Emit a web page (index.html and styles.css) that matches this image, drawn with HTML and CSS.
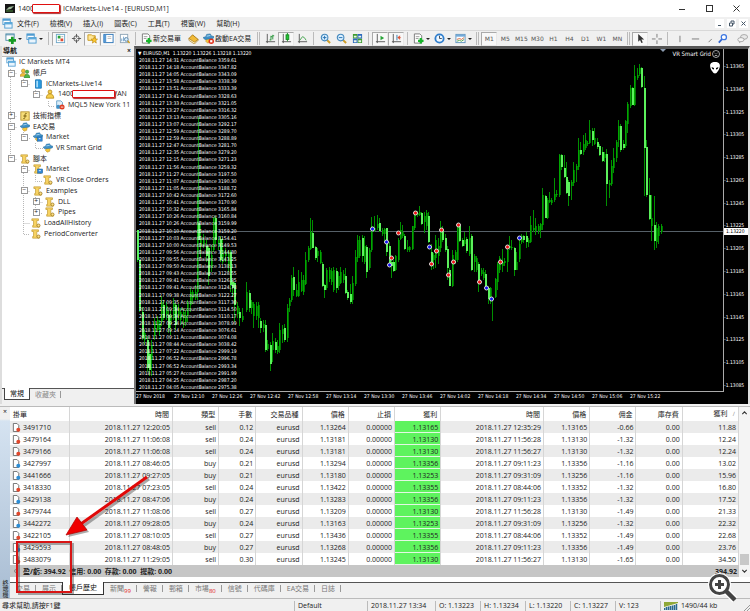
FILE: index.html
```
<!DOCTYPE html>
<html lang="zh-Hant">
<head>
<meta charset="UTF-8">
<title>ICMarkets-Live14 - [EURUSD,M1]</title>
<link rel="stylesheet" href="styles.css">
</head>
<body>
<svg class="sprite" aria-hidden="true">
	<symbol id="i-windows" viewBox="0 0 12 12"><rect x="1" y="1" width="8" height="6" fill="#fff" stroke="#4f9bd0"/><path d="M1 2h8" stroke="#4f9bd0" stroke-width="2"/><rect x="3" y="5" width="8" height="6" fill="#eaf5fd" stroke="#4f9bd0"/><path d="M3 6h8" stroke="#5aa9dc" stroke-width="2"/></symbol>
	<symbol id="i-newchart" viewBox="0 0 12 12"><rect x="1" y="1" width="9" height="7" fill="#fff" stroke="#4c8aa8"/><path d="M1 2h9" stroke="#4c8aa8"/><path d="M8 4v8M4 8h8" stroke="#179b22" stroke-width="3"/></symbol>
	<symbol id="i-watch" viewBox="0 0 12 12"><rect x="1.5" y="1.5" width="9" height="9" fill="#fff" stroke="#70a8c8"/><rect x="3" y="3" width="3" height="3" fill="#27a338"/><rect x="6" y="6" width="3" height="3" fill="#df4c32"/><path d="M3 8h2M7 4h2" stroke="#aaa"/></symbol>
	<symbol id="i-target" viewBox="0 0 12 12"><circle cx="6" cy="6" r="3" fill="none" stroke="#555"/><path d="M6 1v4M6 7v4M1 6h4M7 6h4" stroke="#555"/></symbol>
	<symbol id="i-nav" viewBox="0 0 12 12"><path d="M1 2h4l1 1h3v5H1z" fill="#ffe696" stroke="#c99a1e"/><path d="M8 4l1 2.500 2.500.2-2 1.700.7 2.600L8 9.600 5.800 11l.7-2.600-2-1.700L7 6.500z" fill="#ffcb2e" stroke="#b98512" stroke-width=".7"/></symbol>
	<symbol id="i-terminal" viewBox="0 0 12 12"><rect x="1" y="1.500" width="10" height="9" fill="#fff" stroke="#2b74b7"/><path d="M2 2v8" stroke="#5798d3" stroke-width="3"/><path d="M5 4h4M5 6h4" stroke="#bbb"/></symbol>
	<symbol id="i-tester" viewBox="0 0 12 12"><rect x="1.500" y="1.500" width="8" height="9" fill="#fff" stroke="#8fa6b8"/><path d="M3 9V6M5 9V4M7 9V5" stroke="#6ca0ca"/><circle cx="8" cy="7" r="2" fill="#d9f0ff" stroke="#5b83a5"/><path d="M9.500 8.500l2 2.500" stroke="#c99a1e" stroke-width="1.500"/></symbol>
	<symbol id="i-order" viewBox="0 0 12 12"><path d="M1.500 1h6l2 2v8h-8z" fill="#fff" stroke="#777"/><path d="M3 4h4M3 6h3" stroke="#999"/><path d="M8.500 5.500v6M5.500 8.500h6" stroke="#17b52b" stroke-width="2.500"/></symbol>
	<symbol id="i-book" viewBox="0 0 12 12"><path d="M1 6l4-4 6 5-4 4z" fill="#f1bb38" stroke="#a97814"/><path d="M1 6v2l6 4 4-4V7L7 10z" fill="#fff3c8" stroke="#a97814" stroke-width=".7"/></symbol>
	<symbol id="i-ea" viewBox="0 0 12 12"><path d="M4 5h5l-1 5-3 1-2-2z" fill="#f5c63c" stroke="#b88a1b" stroke-width=".6"/><path d="M0 5l3-1 1-2.500 4-.5 1 2 3 1-1 2-4 .5L2 7z" fill="#3f91c8" stroke="#1f6798" stroke-width=".6"/><path d="M4 3.500l4-.8" stroke="#b5dcf3"/></symbol>
	<symbol id="i-stop" viewBox="0 0 12 12"><use href="#i-ea"/><circle cx="9" cy="9" r="3" fill="#e0301c"/><rect x="7.800" y="7.800" width="2.400" height="2.400" fill="#fff"/></symbol>
	<symbol id="i-bar" viewBox="0 0 12 12"><path d="M2.500 1v10M1 9.500h10" stroke="#555" fill="none"/><path d="M5 7.500h1.500M6.500 3v5M6.500 4H8M8.500 2v5M8.500 3H10" stroke="#239336"/></symbol>
	<symbol id="i-candle" viewBox="0 0 12 12"><path d="M2.500 1v10M1 9.500h10" stroke="#555"/><path d="M7 0v9" stroke="#138c20"/><rect x="5.500" y="2" width="3" height="5" fill="#24c535" stroke="#138c20"/></symbol>
	<symbol id="i-line" viewBox="0 0 12 12"><path d="M2.500 1v10M1 9.500h10" stroke="#555"/><path d="M3 8l3-4 2 1 2 3" fill="none" stroke="#42a34b"/></symbol>
	<symbol id="i-zoomin" viewBox="0 0 12 12"><path d="M7.500 7.500l3.500 3.500" stroke="#cf9e29" stroke-width="2.200"/><circle cx="5" cy="5" r="3.600" fill="#d9efff" stroke="#4588bd" stroke-width="1.200"/><path d="M3 5h4M5 3v4" stroke="#236fb0"/></symbol>
	<symbol id="i-zoomout" viewBox="0 0 12 12"><path d="M7.500 7.500l3.500 3.500" stroke="#cf9e29" stroke-width="2.200"/><circle cx="5" cy="5" r="3.600" fill="#d9efff" stroke="#4588bd" stroke-width="1.200"/><path d="M3 5h4" stroke="#236fb0"/></symbol>
	<symbol id="i-tile" viewBox="0 0 12 12"><path d="M1 1h5v5H1zM6 6h5v5H6z" fill="#3f9c30"/><path d="M6 1h5v5H6zM1 6h5v5H1z" fill="#2d69bd"/><path d="M2 3h3v2H2zM7 3h3v2H7zM2 8h3v2H2zM7 8h3v2H7z" fill="#e8f5e8"/></symbol>
	<symbol id="i-scroll" viewBox="0 0 12 12"><path d="M2.500 1v10M1 9.500h10" stroke="#555"/><path d="M6 3l4 2.500L6 8z" fill="#27a338"/></symbol>
	<symbol id="i-shift" viewBox="0 0 12 12"><path d="M2.500 1v10M1 9.500h10" stroke="#555"/><path d="M6.500 2v6" stroke="#2c79ae"/><path d="M11 5H8M9.500 3L7.500 5l2 2z" fill="#d8492a" stroke="#d8492a" stroke-width=".6"/></symbol>
	<symbol id="i-clock" viewBox="0 0 12 12"><circle cx="6" cy="6" r="4.500" fill="#eef7ff" stroke="#2e7dcc" stroke-width="2"/><path d="M6 3v3h2.500" fill="none" stroke="#345"/></symbol>
	<symbol id="i-template" viewBox="0 0 12 12"><rect x="1" y="1.500" width="10" height="9" fill="#fff" stroke="#5e94bf"/><path d="M1 3h10" stroke="#73aada" stroke-width="2"/><path d="M2 7l3-1 2 1 3-2" fill="none" stroke="#d3653b"/><path d="M2 9l3-1 2 1 3-2" fill="none" stroke="#4aa04a"/></symbol>
	<symbol id="i-cursor" viewBox="0 0 12 12"><path d="M3.500 1v8.500l2-2 1.500 3.500 1.500-.7L7 7h3z" fill="#333"/></symbol>
	<symbol id="i-cross" viewBox="0 0 12 12"><path d="M6.500 1v4M6.500 8v4M1 6.500h4M8 6.500h4" stroke="#777"/></symbol>
	<symbol id="i-vline" viewBox="0 0 12 12"><path d="M6.500 3v7" stroke="#777"/></symbol>
	<symbol id="i-hline" viewBox="0 0 12 12"><path d="M2 6.500h8" stroke="#777"/></symbol>
	<symbol id="i-trend" viewBox="0 0 12 12"><path d="M5 10l3.500-3.500" stroke="#777"/></symbol>
	<symbol id="i-search" viewBox="0 0 12 12"><path d="M6 6L2 10.500" stroke="#2e63d0" stroke-width="2"/><circle cx="7.500" cy="4.500" r="2.800" fill="#fff" stroke="#3c76e0" stroke-width="1.400"/></symbol>
	<symbol id="i-chat" viewBox="0 0 14 12"><ellipse cx="9" cy="4" rx="4.500" ry="3" fill="#e8e8e8" stroke="#999"/><path d="M3 10l-.5 2L6 9.500z" fill="#999"/><ellipse cx="5" cy="7.500" rx="4" ry="2.600" fill="#f5f5f5" stroke="#999"/></symbol>
	<symbol id="i-accounts" viewBox="0 0 12 12"><circle cx="4" cy="3.500" r="2.300" fill="#f0be3c" stroke="#a77b16" stroke-width=".6"/><path d="M0 10c0-5 8-5 8 0z" fill="#f0be3c" stroke="#a77b16" stroke-width=".6"/><circle cx="8.500" cy="4.500" r="2" fill="#4fb54a" stroke="#2d7b2b" stroke-width=".6"/><path d="M5 12c0-6 7-6 7 0z" fill="#4fb54a" stroke="#2d7b2b" stroke-width=".6"/></symbol>
	<symbol id="i-server" viewBox="0 0 12 12"><path d="M3 1h6l1 1v9H3z" fill="#2b9be0" stroke="#1773b4"/><path d="M4 2h2v8H4z" fill="#a8dcfa"/></symbol>
	<symbol id="i-user" viewBox="0 0 12 12"><circle cx="6" cy="3.500" r="2.300" fill="#f6cf4b" stroke="#b88a1b"/><path d="M1.500 11c0-7 9-7 9 0z" fill="#f6cf4b" stroke="#b88a1b"/></symbol>
	<symbol id="i-signal" viewBox="0 0 12 12"><path d="M2 1h5l2 2v7H2z" fill="#ddeef8" stroke="#5c9bc4"/><circle cx="4" cy="8" r="2.300" fill="#3f91c8"/><circle cx="8.500" cy="8.500" r="3" fill="#df3c22"/><path d="M7 8.500h3" stroke="#fff"/></symbol>
	<symbol id="i-func" viewBox="0 0 12 12"><rect x="1" y="1" width="10" height="10" fill="#f6dc78" stroke="#b48e26"/><path d="M8 3c-2-1-2 1-2 3s0 4-2 3M4 6h4" fill="none" stroke="#6b4f00"/></symbol>
	<symbol id="i-market" viewBox="0 0 12 12"><use href="#i-ea"/><rect x="5" y="6" width="6" height="5" fill="#2f86d6" stroke="#1a5f9e" stroke-width=".6"/><path d="M7 8h2" stroke="#fff"/></symbol>
	<symbol id="i-script" viewBox="0 0 12 12"><path d="M1 1h8v2H7v6h3v2H2V9h1V3H1z" fill="#f7d261" stroke="#b68d22" stroke-width=".7"/><circle cx="9" cy="9" r="1.800" fill="#ffe184" stroke="#9d7a20"/></symbol>
	<symbol id="i-smarket" viewBox="0 0 12 12"><use href="#i-script"/><rect x="5.500" y="6" width="6" height="5" fill="#2f86d6" stroke="#1a5f9e" stroke-width=".6"/><path d="M7 8h2.500" stroke="#fff"/></symbol>
	<symbol id="i-sell" viewBox="0 0 10 10"><path d="M1.500.5h4l2 2v7h-6z" fill="#fff" stroke="#666"/><circle cx="7" cy="7.500" r="2.200" fill="#e2472a"/></symbol>
	<symbol id="i-buy" viewBox="0 0 10 10"><path d="M1.500.5h4l2 2v7h-6z" fill="#fff" stroke="#666"/><circle cx="7" cy="7.500" r="2.200" fill="#2d8ed6"/></symbol>
</svg>

<header class="titlebar">
	<svg class="app-icon" viewBox="0 0 10 9"><rect width="10" height="9" fill="#161616"/><path d="M1 6l3-3 5-1-3 3z" fill="#9fba9a"/><path d="M1 7h7" stroke="#4f8b3d"/></svg>
	<span>1400</span><i class="redact"></i><span>ICMarkets-Live14 - [EURUSD,M1]</span>
	<div class="win-btns">
		<button aria-label="最小化"><svg viewBox="0 0 9 9"><path d="M1 5.500h6" stroke="#333"/></svg></button>
		<button aria-label="最大化"><svg viewBox="0 0 9 9"><rect x="1.500" y="1.500" width="6" height="6" fill="none" stroke="#333"/></svg></button>
		<button aria-label="關閉"><svg viewBox="0 0 9 9"><path d="M1.500 1.500l6 6M7.500 1.500l-6 6" stroke="#333"/></svg></button>
	</div>
</header>

<nav class="menubar">
	<svg class="icon"><use href="#i-windows"/></svg>
	<button>文件(F)</button><button>檢視(V)</button><button>插入(I)</button><button>圖表(C)</button><button>工具(T)</button><button>視窗(W)</button><button>幫助(H)</button>
	<div class="mdi-btns">
		<button aria-label="最小化圖表"><svg viewBox="0 0 9 9"><path d="M3 6.500h3" stroke="#456"/></svg></button>
		<button aria-label="還原圖表"><svg viewBox="0 0 9 9"><path d="M4 3.500V2h3v3H6M2.500 4h3v3h-3z" fill="none" stroke="#456"/></svg></button>
		<button aria-label="關閉圖表"><svg viewBox="0 0 9 9"><path d="M2.500 2.500l4 4M6.500 2.500l-4 4" stroke="#456"/></svg></button>
	</div>
</nav>

<div class="toolbar">
	<button class="drop" aria-label="新圖表"><svg class="icon"><use href="#i-newchart"/></svg></button>
	<button class="drop" aria-label="設定檔"><svg class="icon"><use href="#i-windows"/></svg></button>
	<i class="sep"></i>
	<button class="on" aria-label="市場報價"><svg class="icon"><use href="#i-watch"/></svg></button>
	<button aria-label="數據視窗"><svg class="icon"><use href="#i-target"/></svg></button>
	<button class="on" aria-label="導航"><svg class="icon"><use href="#i-nav"/></svg></button>
	<button class="on" aria-label="終端"><svg class="icon"><use href="#i-terminal"/></svg></button>
	<button aria-label="策略測試"><svg class="icon"><use href="#i-tester"/></svg></button>
	<i class="sep"></i>
	<button class="text"><svg class="icon"><use href="#i-order"/></svg>新交易單</button>
	<button aria-label="編輯器"><svg class="icon"><use href="#i-book"/></svg></button>
	<button class="text"><svg class="icon"><use href="#i-stop"/></svg>啟動EA交易</button>
	<i class="grip"></i>
	<button aria-label="柱狀圖"><svg class="icon"><use href="#i-bar"/></svg></button>
	<button class="on" aria-label="陰陽燭"><svg class="icon"><use href="#i-candle"/></svg></button>
	<button aria-label="折線圖"><svg class="icon"><use href="#i-line"/></svg></button>
	<i class="sep"></i>
	<button aria-label="放大"><svg class="icon"><use href="#i-zoomin"/></svg></button>
	<button aria-label="縮小"><svg class="icon"><use href="#i-zoomout"/></svg></button>
	<button aria-label="平鋪"><svg class="icon"><use href="#i-tile"/></svg></button>
	<i class="sep"></i>
	<button class="on" aria-label="自動捲動"><svg class="icon"><use href="#i-scroll"/></svg></button>
	<button class="on" aria-label="圖表平移"><svg class="icon"><use href="#i-shift"/></svg></button>
	<i class="sep"></i>
	<button class="drop" aria-label="指標"><svg class="icon"><use href="#i-order"/></svg></button>
	<button class="drop" aria-label="週期"><svg class="icon"><use href="#i-clock"/></svg></button>
	<button class="drop" aria-label="模板"><svg class="icon"><use href="#i-template"/></svg></button>
	<i class="grip"></i>
	<button class="tf on">M1</button><button class="tf">M5</button><button class="tf">M15</button><button class="tf">M30</button><button class="tf">H1</button><button class="tf">H4</button><button class="tf">D1</button><button class="tf">W1</button><button class="tf">MN</button>
	<i class="grip"></i>
	<button class="on" aria-label="游標"><svg class="icon"><use href="#i-cursor"/></svg></button>
	<button aria-label="十字線"><svg class="icon"><use href="#i-cross"/></svg></button>
	<i class="sep"></i>
	<button aria-label="垂直線"><svg class="icon"><use href="#i-vline"/></svg></button>
	<button aria-label="水平線"><svg class="icon"><use href="#i-hline"/></svg></button>
	<button class="slim" aria-label="趨勢線"><svg class="icon"><use href="#i-trend"/></svg></button>
	<button class="slim" aria-label="搜尋"><svg class="icon"><use href="#i-search"/></svg></button>
	<button class="chat" aria-label="聊天"><svg class="icon"><use href="#i-chat"/></svg></button>
</div>

<main class="work">
	<aside class="navigator">
		<h2>導航<button aria-label="關閉導航">×</button></h2>
		<div class="tree-box">
			<svg class="tree-lines"><path d="M10.500 12V105M10.500 16.500H17M23.500 22V28M23.500 27.500H30M35.500 33V39M35.500 38.500H43M48.500 44V49.500H55M10.500 59.500H17M10.500 70.500H17M23.500 75V81.500H30M35.500 86V91.500H43M10.500 102.500H17M23.500 108V177.500H30M23.500 113.500H30M35.500 118V124.500H43M23.500 134.500H30M35.500 140V156.500H43M35.500 145.500H43M23.500 166.500H30"/></svg>
			<ul class="tree">
				<li class="l0"><svg class="icon"><use href="#i-windows"/></svg>IC Markets MT4</li>
				<li class="l1 open"><svg class="icon"><use href="#i-accounts"/></svg>帳戶</li>
				<li class="l2 open"><svg class="icon"><use href="#i-server"/></svg>ICMarkets-Live14</li>
				<li class="l3 open"><svg class="icon"><use href="#i-user"/></svg>1400<i class="redact wide"></i>VAN</li>
				<li class="l4"><svg class="icon"><use href="#i-signal"/></svg>MQL5 New York 11</li>
				<li class="l1 shut"><svg class="icon"><use href="#i-func"/></svg>技術指標</li>
				<li class="l1 open"><svg class="icon"><use href="#i-ea"/></svg>EA交易</li>
				<li class="l2 open"><svg class="icon"><use href="#i-market"/></svg>Market</li>
				<li class="l3"><svg class="icon"><use href="#i-ea"/></svg>VR Smart Grid</li>
				<li class="l1 open"><svg class="icon"><use href="#i-script"/></svg>腳本</li>
				<li class="l2 open"><svg class="icon"><use href="#i-smarket"/></svg>Market</li>
				<li class="l3"><svg class="icon"><use href="#i-script"/></svg>VR Close Orders</li>
				<li class="l2 open"><svg class="icon"><use href="#i-script"/></svg>Examples</li>
				<li class="l3 shut"><svg class="icon"><use href="#i-script"/></svg>DLL</li>
				<li class="l3 shut"><svg class="icon"><use href="#i-script"/></svg>Pipes</li>
				<li class="l2"><svg class="icon"><use href="#i-script"/></svg>LoadAllHistory</li>
				<li class="l2"><svg class="icon"><use href="#i-script"/></svg>PeriodConverter</li>
			</ul>
		</div>
		<div class="nav-tabs"><button class="active">常規</button><button>收藏夾</button></div>
	</aside>

	<section class="chart">
		<div class="plot">
			<svg class="candles" id="candles"></svg>
			<div class="quote"><b>▼</b> EURUSD,M1 &nbsp;1.13220 1.13226 1.13218 1.13220</div>
			<ol class="log" id="log"></ol>
			<div class="expert">VR Smart Grid<svg viewBox="0 0 8 8"><circle cx="4" cy="4" r="3.500" fill="none" stroke="#ccc" stroke-width=".8"/><path d="M2.500 3l1 .7M5.500 3l-1 .7M2.500 6q1.500-1.500 3 0" stroke="#ccc" fill="none" stroke-width=".8"/></svg></div>
			<svg class="alien" viewBox="0 0 10 12"><path d="M5 0c7 0 5 6 3 9q-3 5-6 0C0 6-2 0 5 0z" fill="#fff"/><path d="M1.500 5l2.500 1v1.500q-2 0-2.500-2.500zM8.500 5L6 6v1.500q2 0 2.500-2.500z" fill="#000"/></svg>
			<svg class="shift" viewBox="0 0 6 3"><path d="M0 0h6L3 3z" fill="#8c9bb0"/></svg>
		</div>
		<div class="prices" id="prices"></div>
		<div class="times" id="times"></div>
	</section>
</main>

<section class="terminal">
	<div class="side"><button aria-label="關閉終端">×</button><span>終端機</span></div>
	<div class="history">
		<div class="grid">
			<table>
				<colgroup><col class="c-id"><col class="c-time"><col><col class="c-lots"><col><col><col><col><col class="c-time"><col><col><col><col class="c-profit"></colgroup>
				<thead><tr><th>掛單</th><th>時間</th><th>類型</th><th>手數</th><th>交易品種</th><th>價格</th><th>止損</th><th>獲利</th><th>時間</th><th>價格</th><th>佣金</th><th>庫存費</th><th>獲利 &nbsp; <small>∕</small></th></tr></thead>
				<tbody id="orders"></tbody>
				<tfoot><tr><td colspan="12"><i class="dot"></i>盈/虧: 394.92 &nbsp;信用: 0.00 &nbsp;存款: 0.00 &nbsp;提款: 0.00</td><td>394.92</td></tr></tfoot>
			</table>
			<div class="scroll"><svg viewBox="0 0 10 8"><path d="M3 5l2-2 2 2" fill="none" stroke="#333"/></svg><i></i><svg viewBox="0 0 10 8"><path d="M3 3l2 2 2-2" fill="none" stroke="#333"/></svg></div>
		</div>
		<div class="tabs">
			<button>交易</button><button>展示</button><button class="active">帳戶歷史</button><button>新聞<sub>99</sub></button><button>警報</button><button>郵箱</button><button>市場<sub>80</sub></button><button>信號</button><button>代碼庫</button><button>EA交易</button><button>日誌</button>
		</div>
	</div>
	<svg class="notes" viewBox="0 0 160 130"><g transform="translate(2 2)" opacity=".4"><path d="M147 10L80 58" stroke="#333" stroke-width="3"/><path d="M66 68l11-18 10 13z" fill="#333"/><rect x="17" y="75" width="54" height="50" fill="none" stroke="#333" stroke-width="2"/></g><path d="M147 10L78 59" stroke="#e00808" stroke-width="3"/><path d="M66 68l11-18 10 13z" fill="#f00000" stroke="#b00000" stroke-width=".7"/><rect x="17" y="75" width="54" height="50" fill="none" stroke="#d81414" stroke-width="2"/></svg>
</section>

<footer class="status">
	<span class="hint">尋求幫助,請按F1鍵</span>
	<span class="profile">Default</span>
	<span class="clock">2018.11.27 13:34</span>
	<span>O: 1.13223</span>
	<span>H: 1.13234</span>
	<span>L: 1.13220</span>
	<span>C: 1.13227</span>
	<span>V: 123</span>
	<span class="net"><svg viewBox="0 0 14 8"><path d="M0 0h14v1L0 5z" fill="#8fa838"/><path d="M.5 8V6M2.500 8V5M4.500 8V4.500M6.500 8V4M8.500 8V3.500M10.500 8V3M12.500 8V2" stroke="#28688f" stroke-width="1.500"/></svg>1490/44 kb</span>
	<svg class="resize" viewBox="0 0 9 9"><path d="M1 9l8-8M4 9l5-5M7 9l2-2" stroke="#999"/></svg>
</footer>

<button class="magnify" aria-label="放大圖片"><svg viewBox="0 0 30 30"><path d="M18 18l9 9" stroke="#fff" stroke-width="7"/><circle cx="11.500" cy="11.500" r="9.500" fill="#fff" stroke="#fff" stroke-width="4"/><path d="M18 18l9 9" stroke="#444" stroke-width="4.500"/><circle cx="11.500" cy="11.500" r="9" fill="#fff" stroke="#444" stroke-width="3"/><path d="M7 11.500h9M11.500 7v9" stroke="#444" stroke-width="3"/></svg></button>
<script src="chart.js"></script>
</body>
</html>
```
FILE: styles.css
```
* {
	box-sizing: border-box;
}

body {
	margin: 0;
	min-height: 100vh;
	display: flex;
	flex-direction: column;
	position: relative;
	background: #f0f0f0;
	color: #222;
	font: 7px/10px "Open Sans", "Noto Sans CJK TC", sans-serif;
}

button {
	margin: 0;
	padding: 0;
	border: 0;
	background: none;
	color: inherit;
	font: inherit;
	white-space: nowrap;
}

svg {
	display: block;
	flex: none;
}

.sprite {
	position: absolute;
	width: 0;
	height: 0;
}

.icon {
	width: 11px;
	height: 11px;
}

/* title */
.titlebar {
	display: flex;
	align-items: center;
	height: 17px;
	padding-left: 5px;
	background: #fff;
}

.app-icon {
	width: 10px;
	height: 9px;
	margin-right: 3px;
}

.redact {
	width: 28px;
	height: 9px;
	margin: 0 3px 0 -2px;
	border: 1px solid #e01010;
	border-radius: 1px;
	background: #fff;
	box-shadow: 1px 1px 1px #a33;
}

.redact.wide {
	width: 43px;
	height: 8px;
	margin-right: -2px;
	z-index: 1;
}

.win-btns,
.mdi-btns {
	display: flex;
	margin-left: auto;
}

.win-btns button {
	width: 27px;
	display: flex;
	justify-content: center;
}

.win-btns svg {
	width: 9px;
	height: 9px;
}

/* menu */
.menubar {
	display: flex;
	align-items: center;
	gap: 11px;
	height: 13px;
	padding-left: 2px;
}

.menubar .icon {
	margin-right: -7px;
}

.mdi-btns {
	gap: 3px;
	padding-right: 2px;
}

.mdi-btns button {
	background: #fff;
}

.mdi-btns svg {
	width: 9px;
	height: 9px;
}

/* toolbar */
.toolbar {
	display: flex;
	align-items: center;
	height: 16px;
	padding-left: 3px;
	border-top: 1px solid #d8d8d8;
}

.toolbar button {
	flex: none;
	width: 16px;
	height: 14px;
	display: flex;
	align-items: center;
	justify-content: center;
	border: 1px solid transparent;
}

.toolbar .on {
	border-color: #aaa #e8e8e8 #e8e8e8 #aaa;
	background: #f8f8f8;
}

.toolbar .drop {
	width: 21px;
	gap: 2px;
}

.toolbar .drop::after {
	content: "";
	border: 2px solid transparent;
	border-top-color: #222;
	border-bottom: 0;
}

.toolbar .text {
	width: auto;
	padding: 0 3px 0 1px;
	gap: 1px;
}

.toolbar .tf {
	color: #555;
	font: 6px/10px "DejaVu Sans", sans-serif;
}

.toolbar .slim {
	width: 13px;
}

.toolbar .chat {
	margin-left: auto;
}

.sep {
	width: 1px;
	height: 13px;
	margin: 0 3px;
	background: #bbb;
}

.grip {
	width: 3px;
	height: 13px;
	margin: 0 2px;
	border: solid #bbb;
	border-width: 0 1px;
}

/* navigator */
.work {
	display: flex;
	height: 358px;
}

.navigator {
	display: flex;
	flex-direction: column;
	flex: none;
	width: 134px;
	border-left: 2px solid #ddd;
	background: #fff;
}

.navigator h2 {
	display: flex;
	justify-content: space-between;
	margin: 0;
	padding: 0 3px 0 1px;
	background: #f0f0f0;
	font-size: 7px;
	line-height: 10px;
}

.tree-box {
	flex: 1;
	position: relative;
	border-top: 1px solid #bbb;
	overflow: hidden;
}

.tree-lines {
	position: absolute;
	left: -2px;
	top: 0;
	width: 60px;
	height: 182px;
	fill: none;
	stroke: #b8b8b8;
	stroke-dasharray: 1 1;
}

.tree {
	position: relative;
	display: grid;
	grid-template-rows: repeat(17, 1fr);
	height: 182px;
	margin: 0;
	padding: 0;
	list-style: none;
}

.tree li {
	display: flex;
	align-items: center;
	min-height: 0;
	white-space: nowrap;
}

.tree .icon {
	width: 10px;
	height: 10px;
	margin-right: 3px;
}

.l0 { padding-left: 4px; }
.l1 { padding-left: 16px; }
.l2 { padding-left: 29px; }
.l3 { padding-left: 41px; }
.l4 { padding-left: 53px; }

.open::before,
.shut::before {
	content: "−";
	width: 5px;
	height: 5px;
	margin: 0 5px 0 -10px;
	border: 1px solid #999;
	background: #fff;
	font: 5px/3px "DejaVu Sans", sans-serif;
	text-align: center;
	text-indent: -1px;
}

.shut::before {
	content: "+";
}

.nav-tabs {
	display: flex;
	height: 16px;
	padding: 0 0 4px 2px;
	border-top: 1px solid #555;
	background: #f0f0f0;
	color: #888;
}

.nav-tabs button {
	padding: 0 5px;
	background: linear-gradient(#999, #999) right center / 1px 7px no-repeat;
}

.nav-tabs .active {
	margin-top: -1px;
	border: solid #444;
	border-width: 0 1px 1px;
	background: #fff;
	color: #111;
}

/* chart */
.chart {
	flex: 1;
	display: grid;
	grid-template: 1fr 12px / 1fr 24px;
	min-width: 0;
	border-top: 3px solid #555;
	border-left: 2px solid #777;
	border-right: 2px solid #ddd;
	background: #000;
	color: #fff;
	font: 5px/7px "DejaVu Sans Condensed", "DejaVu Sans", sans-serif;
}

.plot {
	position: relative;
	overflow: hidden;
	border: solid #aaa;
	border-width: 0 1px 1px 0;
}

.candles {
	position: absolute;
	left: 0;
	top: 0;
	width: 100%;
	height: 100%;
}

.quote {
	position: relative;
	padding-left: 2px;
	line-height: 8px;
}

.quote b {
	font-weight: normal;
}

.log {
	position: relative;
	display: grid;
	grid-auto-rows: 1fr;
	height: 334px;
	margin: 0;
	padding: 0 0 0 3px;
	list-style: none;
}

.log li {
	min-height: 0;
	white-space: pre;
}

.expert {
	position: absolute;
	right: 3px;
	top: 0;
	display: flex;
	align-items: center;
	gap: 1px;
	font-size: 6px;
	line-height: 9px;
}

.expert svg {
	width: 8px;
	height: 8px;
}

.alien {
	position: absolute;
	right: 3px;
	top: 13px;
	width: 10px;
	height: 12px;
}

.shift {
	position: absolute;
	right: 57px;
	top: 0;
	width: 6px;
	height: 3px;
}

.prices {
	position: relative;
	display: flex;
	flex-direction: column;
	justify-content: space-between;
	padding: 14px 0 3px;
}

.prices span::before {
	content: "-";
}

.prices .now {
	position: absolute;
	left: 0;
	right: 0;
	top: 179px;
	padding-left: 2px;
	background: #fff;
	color: #000;
}

.prices .now::before {
	content: none;
}

.times {
	grid-column: 1 / 3;
	display: flex;
	overflow: hidden;
	line-height: 9px;
}

.times span {
	flex: none;
	width: 38px;
	white-space: nowrap;
}

/* terminal */
.terminal {
	position: relative;
	display: flex;
	margin-top: 2px;
	border-top: 1px solid #bbb;
	border-bottom: 1px solid #bbb;
}

.side {
	display: flex;
	flex-direction: column;
	justify-content: space-between;
	align-items: center;
	width: 10px;
	background: linear-gradient(#f0f0f0 12px, #d5e3f1 14px, #a9bdd3);
}

.side span {
	writing-mode: vertical-rl;
	line-height: 8px;
	font-size: 6px;
}

.history {
	flex: 1;
	min-width: 0;
}

.grid {
	display: flex;
	padding-bottom: 5px;
	background: #fff;
	border-bottom: 1px solid #555;
}

table {
	flex: 1;
	width: 100%;
	table-layout: fixed;
	border-collapse: separate;
	border-spacing: 0;
}

col { width: 46px; }
.c-id { width: 60px; }
.c-time { width: 102px; }
.c-lots { width: 37px; }
.c-profit { width: 56px; }

th,
td {
	height: 12px;
	padding: 0 2px;
	border-right: 1px solid #d6d6d6;
	font-weight: normal;
	text-align: right;
	line-height: 11px;
	white-space: nowrap;
}

th {
	height: 14px;
	padding-right: 3px;
}

th:first-child,
td:first-child {
	text-align: left;
}

th:first-child {
	padding-left: 3px;
}

th small {
	color: #888;
}

tbody tr:nth-child(odd) {
	background: #ebebeb;
}

tbody td:first-child svg {
	display: inline-block;
	width: 9px;
	height: 9px;
	margin-right: 2px;
	vertical-align: middle;
}

.hit {
	background: #5ef35e;
	box-shadow: inset 0 -1px #e4f8e4;
}

tfoot td {
	border: 0;
	background: #c6c6c6;
	font-weight: bold;
}

.dot {
	display: inline-block;
	width: 4px;
	height: 4px;
	margin: 0 5px 1px 2px;
	border: 1px solid #888;
	border-radius: 50%;
	vertical-align: middle;
}

.scroll {
	display: flex;
	flex-direction: column;
	width: 11px;
	background: #f4f4f4;
}

.scroll svg {
	width: 11px;
	height: 12px;
}

.scroll i {
	width: 9px;
	height: 11px;
	margin: auto 1px 0;
	background: #c8c8c8;
}

.tabs {
	display: flex;
	height: 15px;
	padding-bottom: 4px;
	color: #777;
}

.tabs button {
	height: 11px;
	padding: 0 6px;
	background: linear-gradient(#999, #999) right center / 1px 7px no-repeat;
}

.tabs .active {
	margin-top: -1px;
	height: 13px;
	border: solid #333;
	border-width: 0 1px 1px;
	background: #fff;
	color: #111;
}

.tabs sub {
	color: #e02020;
	font-size: 6px;
	line-height: 0;
}

.notes {
	position: absolute;
	left: 0;
	bottom: 1px;
	width: 160px;
	height: 130px;
}

/* status */
.status {
	display: flex;
	align-items: center;
	height: 14px;
}

.status span {
	width: 45px;
	padding-left: 3px;
	border-left: 1px solid #bbb;
	white-space: nowrap;
}

.status .hint {
	flex: 1;
	padding-left: 2px;
	border: 0;
}

.status .profile { width: 73px; }
.status .clock { width: 68px; }

.status .net {
	display: flex;
	align-items: center;
	gap: 3px;
	width: 81px;
}

.net svg {
	width: 14px;
	height: 8px;
}

.resize {
	width: 9px;
	height: 9px;
	align-self: flex-end;
}

.magnify {
	position: absolute;
	right: 12px;
	bottom: 10px;
}

.magnify svg {
	width: 30px;
	height: 30px;
}
```
FILE: chart.js
```
// x, high, low, body top, body bottom, 1 = falling candle
var candles = [
	[137,230,262,230,260,1],[139,258,312,260,310,1],[142,307,340,312,338,1],[144,330,345,333,340,0],[147,336,372,340,368,1],[149,352,376,354,370,1],[151,340,376,345,360,0],
	[154,318,340,322,336,0],[157,316,332,320,330,0],[159,320,336,324,332,0],[161,296,326,302,322,0],[163,300,320,305,318,1],[166,302,320,306,316,0],[168,310,333,315,328,1],[170,310,335,315,324,0],
	[173,298,320,303,318,0],[175,303,330,305,325,1],[178,304,320,308,316,0],[180,308,325,312,320,0],[183,308,328,312,318,0],[185,310,326,316,322,0],[187,300,322,302,316,0],[190,288,312,292,305,0],
	[192,290,304,292,298,0],[195,285,300,292,298,0],[197,195,300,225,292,0],[198,117,240,223,240,1],[200,225,258,238,246,0],[203,234,248,240,246,0],[206,240,262,246,256,1],[208,246,285,248,276,1],
	[211,245,272,255,268,0],[213,217,252,218,250,0],[215,216,244,218,240,1],[218,237,250,240,246,0],[220,236,262,239,260,1],[222,238,264,250,262,0],[225,248,262,252,256,0],[228,250,272,252,266,0],
	[230,250,292,252,285,1],[232,280,296,282,288,1],[234,282,322,283,305,1],[237,302,318,306,314,0],[239,308,326,312,318,1],[242,308,322,316,320,0],
	[246,282,312,292,310,0],[249,290,312,293,308,1],[251,300,314,302,308,0],[253,302,328,304,316,0],[256,302,320,306,316,0],[258,302,328,305,318,0],[260,318,333,321,328,1],[263,320,332,324,328,0],
	[265,320,352,325,350,1],[267,340,351,344,349,0],[270,342,371,345,364,1],[272,333,362,341,350,0],[275,338,353,342,350,1],[277,340,354,346,352,0],[279,323,353,330,350,0],[282,325,343,329,334,0],
	[284,324,342,328,340,1],[287,304,342,308,338,0],[289,298,312,300,306,0],[291,275,302,278,300,0],[293,267,296,277,290,1],[296,284,297,290,296,0],[298,270,297,282,296,0],[301,272,292,280,291,0],
	[303,275,295,280,292,0],[305,252,285,260,284,0],[308,246,262,248,260,0],[310,218,250,232,249,0],[312,220,248,233,248,1],[315,246,260,247,258,1],[317,248,262,251,256,0],[320,250,264,252,263,0],
	[322,262,287,264,286,1],[324,284,298,285,290,1],[326,268,290,270,288,0],[329,267,282,270,279,0],[331,268,285,271,282,0],[333,267,292,270,290,0],[336,268,293,271,288,1],[338,272,290,276,286,0],
	[340,267,284,272,283,0],[343,270,283,274,280,0],[345,268,294,276,293,1],[347,290,300,292,298,1],[350,284,304,294,302,1],[352,276,304,283,300,0],[355,250,286,257,284,0],[357,235,262,240,258,0],
	[359,236,258,240,256,0],[362,235,262,238,256,1],[364,236,264,246,262,0],[366,245,278,247,272,1],[369,248,270,250,268,0],[371,217,252,226,250,0],[374,216,232,228,231,0],[377,215,230,224,228,0],
	[379,218,232,223,231,1],[382,228,236,230,234,0],[384,228,243,229,234,0],[386,228,256,228,252,1],[389,242,265,246,263,1],[391,258,278,262,266,1],[393,260,272,262,271,1],[395,255,271,256,270,0],
	[398,238,262,240,260,0],[400,222,240,230,239,0],[402,225,238,232,236,0],[404,234,250,236,249,1],[407,240,252,247,250,0],[409,246,252,247,250,0],[412,226,250,226,249,0],[414,212,230,213,228,0],
	[417,211,217,213,215,0],[419,206,216,212,215,0],[421,212,225,213,224,1],[424,212,233,216,222,0],[426,210,230,213,226,0],[428,212,243,216,242,1],[431,244,270,252,266,1],[433,253,269,255,260,0],
	[435,235,268,240,258,0],[438,238,264,246,256,0],[440,221,252,230,248,0],[442,226,242,230,240,1],[445,234,252,238,250,1],[447,246,280,249,268,1],[449,268,286,270,286,1],[452,250,287,255,286,0],
	[455,250,264,252,260,0],[457,223,262,225,260,0],[459,225,242,226,241,1],[462,238,247,240,246,1],[464,232,246,240,244,0],[466,237,253,239,251,1],[469,226,256,238,254,0],[471,234,271,236,270,1],
	[474,254,272,256,262,0],[476,256,272,258,270,0],[478,262,292,264,284,1],[481,268,276,270,274,0],[483,268,280,272,278,0],[485,270,290,274,289,1],[488,286,304,288,299,1],[490,287,304,288,300,0],
	[492,298,321,298,300,0],[495,278,298,279,297,0],[497,262,290,264,282,0],[499,256,273,258,270,0],[502,249,272,262,266,0],[504,258,266,261,263,0],[507,246,272,250,262,0],[509,236,250,246,248,0],
	[511,240,250,247,248,0],[514,247,276,248,270,1],[516,252,270,262,270,0],[519,238,262,244,259,0],[521,234,244,236,242,0],[523,235,243,236,240,1],[526,232,248,236,242,1],[528,238,247,240,243,0],
	[530,216,243,225,242,0],[533,210,232,228,230,0],[535,218,235,226,231,0],[538,224,234,226,231,0],[540,223,238,224,230,0],[542,188,230,195,225,0],[545,195,218,196,218,1],[547,198,219,200,218,0],
	[549,192,203,200,202,0],[551,198,205,200,203,0],[554,178,202,194,200,0],[556,190,197,194,195,0],[559,154,197,155,195,0],[561,154,170,155,167,1],[564,155,178,168,177,1],[566,162,194,177,193,1],
	[568,180,206,182,196,1],[571,180,200,182,186,0],[573,162,186,170,183,0],[576,164,182,166,170,0],[578,138,170,150,167,0],[580,142,155,150,154,1],[583,135,155,144,152,0],[585,133,150,140,148,0],
	[587,141,146,143,144,0],[589,120,144,130,143,0],[592,128,146,131,140,1],[594,128,145,138,144,0],[597,138,149,142,147,1],[599,144,156,146,155,1],[602,147,162,152,161,1],[604,152,162,154,158,0],
	[606,149,206,154,184,1],[609,180,198,183,185,0],[611,160,186,166,184,0],[613,148,173,158,168,0],[616,140,162,142,158,0],[618,120,147,126,140,0],[620,124,152,126,150,1],[623,140,150,144,148,1],
	[625,120,148,121,146,0],[627,102,133,104,124,0],[630,85,108,88,106,0],[632,87,105,88,105,1],[634,65,106,76,105,0],[637,68,80,75,78,0],[639,64,76,68,74,0],[641,67,88,68,87,1],
	[644,76,196,88,148,1],[646,140,197,147,195,1],[649,178,220,195,219,1],[651,195,241,218,226,0],[654,196,250,225,241,1],[656,222,248,228,242,0],[658,224,244,226,236,0],[661,224,234,226,232,0]
];
var reds = [[391,258],[398,233],[415,213],[431,264],[436,251],[441,230],[448,275],[453,262],[458,225],[479,282],[500,262],[507,247]];
var blues = [[372,229],[386,242],[389,265],[429,247],[486,288],[491,299],[519,238]];

// plot origin of the series above
var X0 = 136, Y0 = 49;
var svg = '<g shape-rendering="crispEdges"><path d="M0 182.5H2000" stroke="#566068"/>';
candles.forEach(function (c) {
	var x = c[0] - X0;
	svg += '<rect x="' + x + '" y="' + (c[1] - Y0) + '" width="1" height="' + (c[2] - c[1]) + '" fill="#008f00"/>';
	svg += '<rect x="' + x + '" y="' + (c[3] - Y0) + '" width="' + (c[5] ? 2 : 1) + '" height="' + (c[4] - c[3]) + '" fill="' + (c[5] ? '#5cf05c' : '#00a800') + '"/>';
	if (!c[5]) {
		svg += '<rect x="' + (x + 1) + '" y="' + (c[3] - Y0) + '" width="1" height="' + (c[4] - c[3]) + '" fill="#007000"/>';
	}
});
svg += '</g>';
function marks(list, color) {
	list.forEach(function (p) {
		svg += '<circle cx="' + (p[0] - X0 + 0.5) + '" cy="' + (p[1] - Y0) + '" r="2" fill="' + color + '" stroke="#ddd"/>';
	});
}
marks(reds, '#f01010');
marks(blues, '#1010f0');
document.getElementById('candles').innerHTML = svg;

var log = '14:31 3359.61,14:18 3347.82,14:05 3343.09,13:58 3338.39,13:51 3333.39,13:41 3328.63,13:33 3321.05,13:27 3316.32,13:13 3305.16,13:07 3292.17,12:59 3289.70,12:59 3288.89,12:47 3281.70,12:35 3279.20,12:15 3271.23,11:56 3259.32,11:27 3197.50,11:07 3190.30,11:05 3188.72,10:42 3172.60,10:41 3170.90,10:32 3165.84,10:26 3160.84,10:26 3159.99,10:10 3159.20,10:03 3154.41,10:00 3149.53,09:56 3144.80,09:55 3143.25,09:50 3138.13,09:43 3128.55,09:41 3126.85,09:41 3124.78,09:38 3122.27,09:35 3117.30,09:34 3114.50,09:34 3110.17,09:24 3078.99,09:14 3076.61,09:11 3074.08,08:44 3038.42,07:22 2999.19,06:52 2996.78,06:52 2993.34,05:27 2991.99,04:25 2987.20,04:05 2975.38';
document.getElementById('log').innerHTML = log.split(',').map(function (s) {
	var p = s.split(' ');
	return '<li>2018.11.27 ' + p[0] + ' AccountBalance ' + p[1] + '</li>';
}).join('');

var prices = '';
for (var p = 13365; p >= 13085; p -= 20) {
	prices += '<span>1.' + p + '</span>';
}
document.getElementById('prices').innerHTML = prices + '<span class="now">1.13220</span>';

document.getElementById('times').innerHTML = '2018,12:10,12:26,12:42,12:58,13:14,13:30,13:46,14:02,14:18,14:34,14:50,15:06,15:22'.split(',').map(function (t) {
	return '<span>27 Nov ' + t + '</span>';
}).join('');

var orders = [
	['3491710','12:20:05','sell','0.12','1.13264','1.13165','12:35:29','1.13165','-0.66','11.88'],
	['3479164','11:06:08','sell','0.24','1.13181','1.13130','11:56:28','1.13130','-1.32','12.24'],
	['3479166','11:06:08','sell','0.24','1.13181','1.13130','11:56:27','1.13130','-1.32','12.24'],
	['3427997','08:46:05','buy','0.21','1.13294','1.13356','09:11:23','1.13356','-1.16','13.02'],
	['3441666','09:27:05','buy','0.21','1.13180','1.13253','09:31:09','1.13256','-1.16','15.96'],
	['3418330','07:23:05','sell','0.24','1.13422','1.13355','08:44:06','1.13352','-1.32','16.80'],
	['3429138','08:47:06','buy','0.24','1.13283','1.13356','09:11:23','1.13356','-1.32','17.52'],
	['3479744','11:08:06','sell','0.27','1.13209','1.13130','11:56:28','1.13130','-1.49','21.33'],
	['3442272','09:28:05','buy','0.24','1.13163','1.13253','09:31:09','1.13256','-1.32','22.32'],
	['3422105','08:10:05','sell','0.27','1.13436','1.13355','08:44:06','1.13352','-1.49','22.68'],
	['3429593','08:48:05','buy','0.27','1.13268','1.13356','09:11:23','1.13356','-1.49','23.76'],
	['3483079','11:29:05','sell','0.30','1.13245','1.13130','11:56:27','1.13130','-1.65','34.50']
];
document.getElementById('orders').innerHTML = orders.map(function (o) {
	return '<tr><td><svg><use href="#i-' + o[2] + '"/></svg>' + o[0] + '</td><td>2018.11.27 ' + o[1] + '</td><td>' + o[2] + '</td><td>' + o[3] +
		'</td><td>eurusd</td><td>' + o[4] + '</td><td>0.00000</td><td class="hit">' + o[5] + '</td><td>2018.11.27 ' + o[6] + '</td><td>' + o[7] +
		'</td><td>' + o[8] + '</td><td>0.00</td><td>' + o[9] + '</td></tr>';
}).join('');
```
